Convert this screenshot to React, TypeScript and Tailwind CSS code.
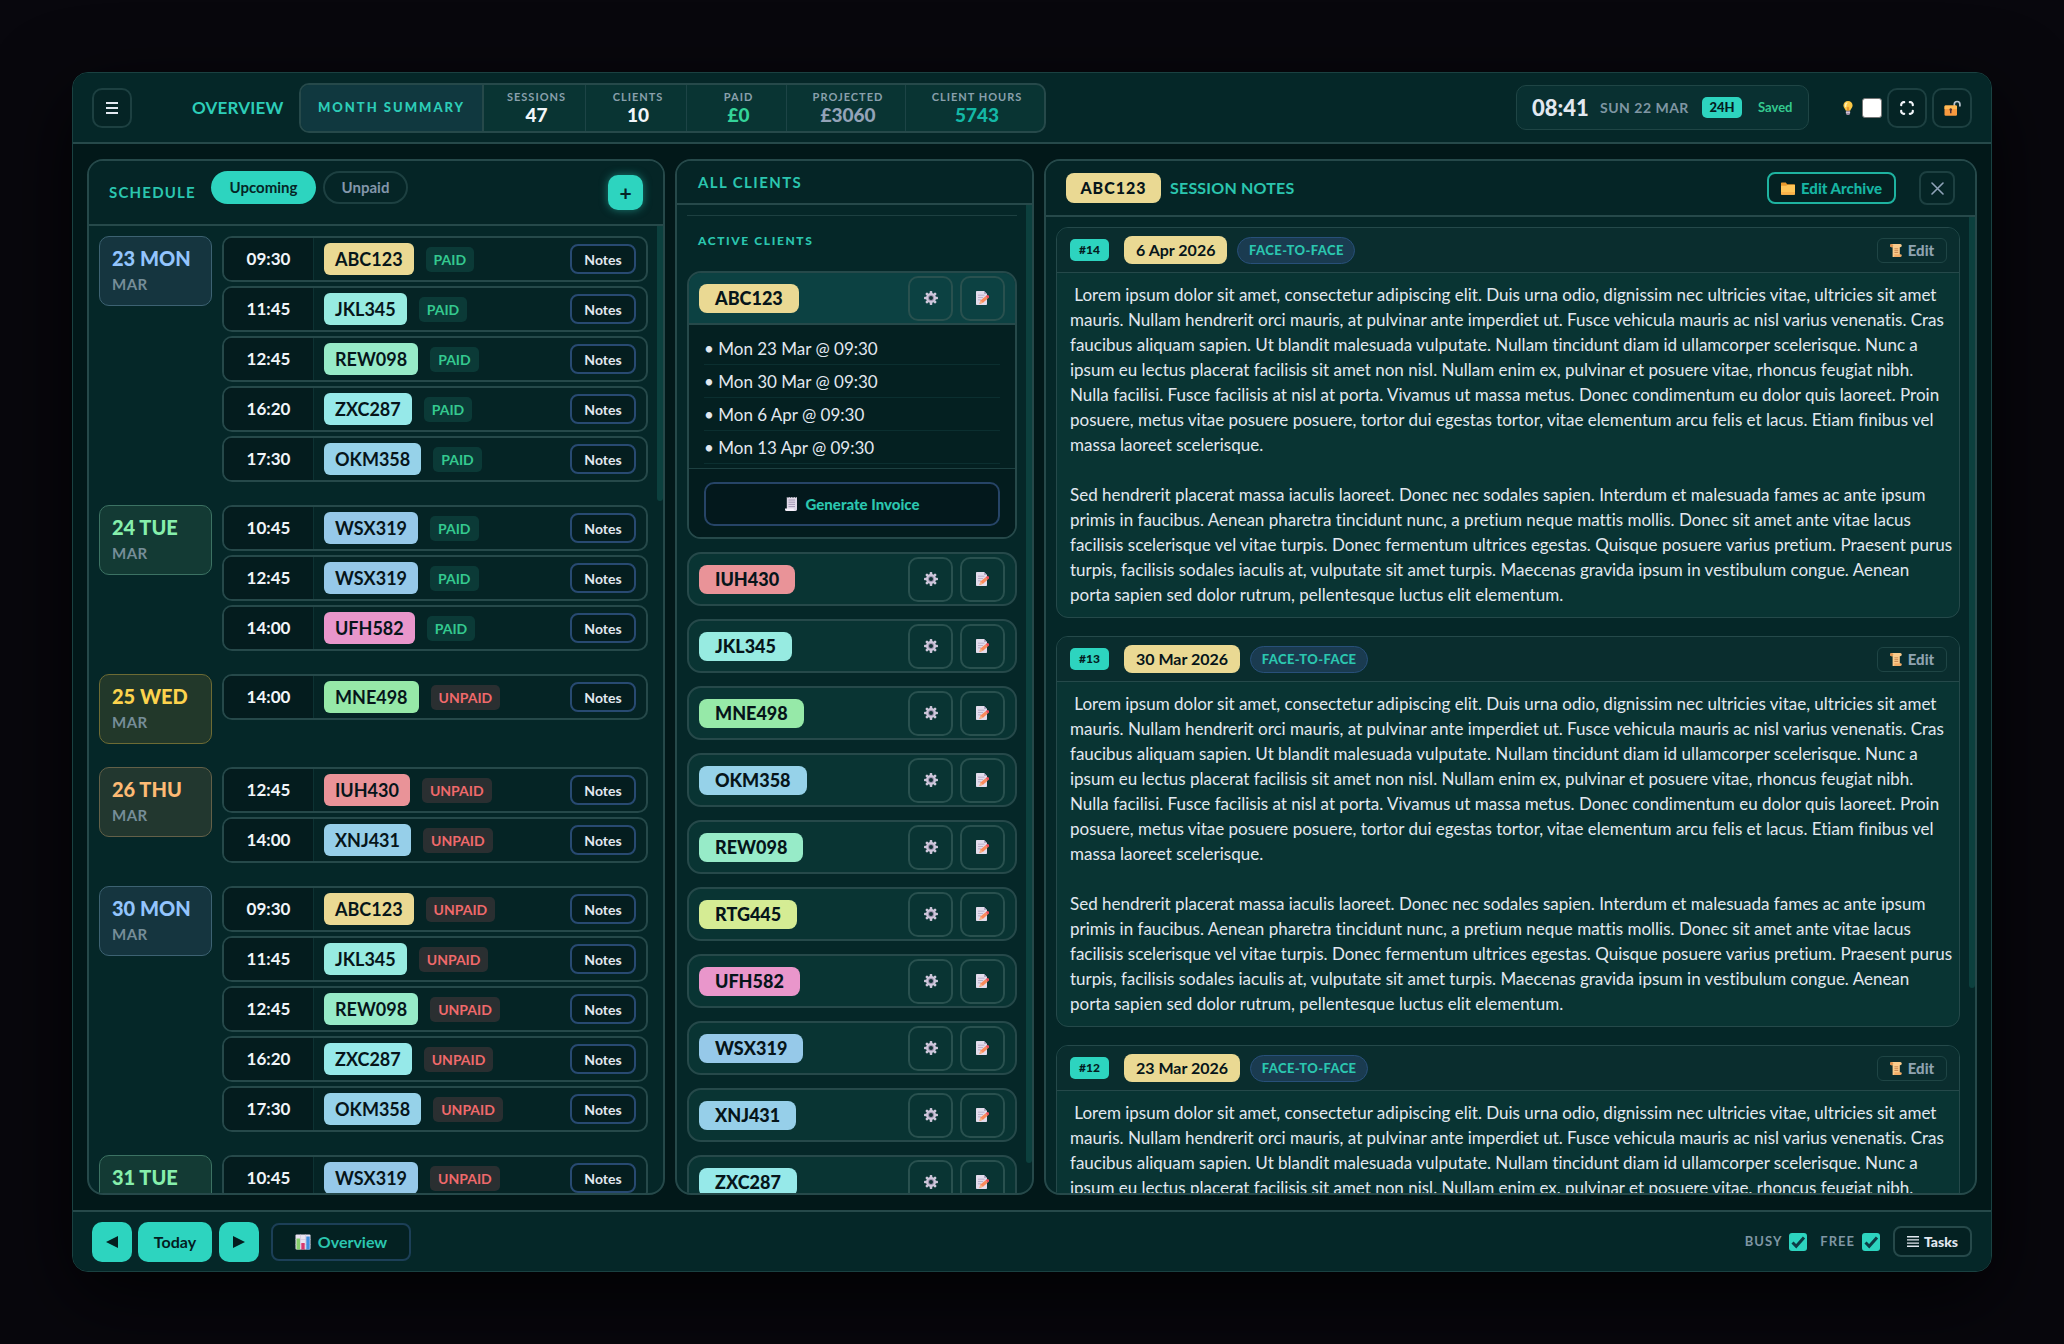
import React from "react";

/* ---------- data ---------- */

const tints: Record<string, string> = {
  ABC123: "bg-[#ead993]",
  IUH430: "bg-[#e99398]",
  JKL345: "bg-[#97ebe1]",
  MNE498: "bg-[#96e9a8]",
  OKM358: "bg-[#96d2e9]",
  REW098: "bg-[#97ebc8]",
  RTG445: "bg-[#d5ec94]",
  UFH582: "bg-[#e996cb]",
  WSX319: "bg-[#96c9e9]",
  XNJ431: "bg-[#96cfe9]",
  ZXC287: "bg-[#96e9e9]",
};

const dayStyles = {
  blue: "bg-[#15353f] border-[#3d6272] text-[#93c5fd]",
  green: "bg-[#133a34] border-[#3c7263] text-[#86efac]",
  yellow: "bg-[#22382a] border-[#6d6b34] text-[#fcd34d]",
  orange: "bg-[#22372f] border-[#636048] text-[#fdba74]",
};

type Day = {
  label: string;
  tone: keyof typeof dayStyles;
  paid: boolean;
  rows: [string, string][];
};

const monday: [string, string][] = [
  ["09:30", "ABC123"],
  ["11:45", "JKL345"],
  ["12:45", "REW098"],
  ["16:20", "ZXC287"],
  ["17:30", "OKM358"],
];
const tuesday: [string, string][] = [
  ["10:45", "WSX319"],
  ["12:45", "WSX319"],
  ["14:00", "UFH582"],
];

const days: Day[] = [
  { label: "23 MON", tone: "blue", paid: true, rows: monday },
  { label: "24 TUE", tone: "green", paid: true, rows: tuesday },
  { label: "25 WED", tone: "yellow", paid: false, rows: [["14:00", "MNE498"]] },
  { label: "26 THU", tone: "orange", paid: false, rows: [["12:45", "IUH430"], ["14:00", "XNJ431"]] },
  { label: "30 MON", tone: "blue", paid: false, rows: monday },
  { label: "31 TUE", tone: "green", paid: false, rows: [["10:45", "WSX319"]] },
];

const otherClients = ["IUH430", "JKL345", "MNE498", "OKM358", "REW098", "RTG445", "UFH582", "WSX319", "XNJ431", "ZXC287"];
const upcoming = ["Mon 23 Mar @ 09:30", "Mon 30 Mar @ 09:30", "Mon 6 Apr @ 09:30", "Mon 13 Apr @ 09:30"];

const stats: [string, string, string, string][] = [
  ["SESSIONS", "47", "text-[#f1f5f9]", "w-[102px]"],
  ["CLIENTS", "10", "text-[#f1f5f9]", "w-[101px]"],
  ["PAID", "£0", "text-[#34d399]", "w-[100px]"],
  ["PROJECTED", "£3060", "text-[#94a3b8]", "w-[119px]"],
  ["CLIENT HOURS", "5743", "text-[#14b8a6]", "w-[138px]"],
];

const notes: [string, string][] = [
  ["#14", "6 Apr 2026"],
  ["#13", "30 Mar 2026"],
  ["#12", "23 Mar 2026"],
];

const noteText =
  " Lorem ipsum dolor sit amet, consectetur adipiscing elit. Duis urna odio, dignissim nec ultricies vitae, ultricies sit amet mauris. Nullam hendrerit orci mauris, at pulvinar ante imperdiet ut. Fusce vehicula mauris ac nisl varius venenatis. Cras faucibus aliquam sapien. Ut blandit malesuada vulputate. Nullam tincidunt diam id ullamcorper scelerisque. Nunc a ipsum eu lectus placerat facilisis sit amet non nisl. Nullam enim ex, pulvinar et posuere vitae, rhoncus feugiat nibh. Nulla facilisi. Fusce facilisis at nisl at porta. Vivamus ut massa metus. Donec condimentum eu dolor quis laoreet. Proin posuere, metus vitae posuere posuere, tortor dui egestas tortor, vitae elementum arcu felis et lacus. Etiam finibus vel massa laoreet scelerisque.\n\nSed hendrerit placerat massa iaculis laoreet. Donec nec sodales sapien. Interdum et malesuada fames ac ante ipsum primis in faucibus. Aenean pharetra tincidunt nunc, a pretium neque mattis mollis. Donec sit amet ante vitae lacus facilisis scelerisque vel vitae turpis. Donec fermentum ultrices egestas. Quisque posuere varius pretium. Praesent purus turpis, facilisis sodales iaculis at, vulputate sit amet turpis. Maecenas gravida ipsum in vestibulum congue. Aenean porta\u00a0sapien sed dolor rutrum, pellentesque luctus elit elementum.";

/* ---------- icons ---------- */

const Menu = () => (
  <svg width="12" height="12" viewBox="0 0 12 12" fill="currentColor" aria-hidden="true">
    <path d="M0 0h12v2H0zM0 5h12v2H0zM0 10h12v2H0z" />
  </svg>
);

const MenuFine = () => (
  <svg width="12" height="11" viewBox="0 0 12 11" fill="currentColor" aria-hidden="true">
    <path d="M0 0h12v1.400H0zM0 3.200h12v1.400H0zM0 6.400h12v1.400H0zM0 9.600h12V11H0z" />
  </svg>
);

const Fullscreen = () => (
  <svg width="14" height="14" viewBox="0 0 14 14" fill="none" stroke="currentColor" strokeWidth="2.200" strokeLinecap="round" aria-hidden="true">
    <path d="M1.200 4.200V3.700a2.500 2.500 0 0 1 2.500-2.500h.5M9.800 1.200h.5a2.500 2.500 0 0 1 2.500 2.500v.5M12.800 9.800v.5a2.500 2.500 0 0 1-2.500 2.500h-.5M4.200 12.800h-.5a2.500 2.500 0 0 1-2.500-2.500v-.5" />
  </svg>
);

const Close = () => (
  <svg width="13" height="13" viewBox="0 0 13 13" fill="none" stroke="currentColor" strokeWidth="1.6" strokeLinecap="round" aria-hidden="true">
    <path d="M1 1l11 11M12 1L1 12" />
  </svg>
);

const Bulb = () => (
  <svg width="10" height="14" viewBox="0 0 10 14" aria-hidden="true">
    <path d="M5 0a4.600 4.600 0 0 0-4.600 4.600C.4 7 2.400 7.800 2.800 9.800h4.400C7.600 7.800 9.600 7 9.600 4.600A4.600 4.600 0 0 0 5 0z" fill="#fbc846" />
    <path d="M3.600 1.500a3 3 0 0 0-1.900 3.200c.1 1 .6 1.500 1.200 1.500s.5-1 .6-2.100.8-1.600 1.100-2.100-.3-.8-1-.5z" fill="#fff0b5" />
    <path d="M3.900 5.500L5 6.500l1.100-1v4.300H3.900z" fill="#e8962e" />
    <path d="M2.900 9.800h4.200v2.700a1.400 1.400 0 0 1-1.400 1.400H4.300a1.400 1.400 0 0 1-1.400-1.400z" fill="#9c8fa5" />
    <path d="M2.900 11h4.200v1H2.900z" fill="#d0c4d6" />
  </svg>
);

const Unlock = () => (
  <svg width="17" height="16" viewBox="0 0 17 16" aria-hidden="true">
    <path d="M10.300 6.500V4.300a2.800 2.800 0 0 1 5.600 0v1.500" fill="none" stroke="#b9c3cf" strokeWidth="1.700" strokeLinecap="round" />
    <rect x="0.500" y="5.500" width="12.500" height="10.300" rx="1.200" fill="#f99a3f" />
    <path d="M1.700 5.500h10.100A1.200 1.200 0 0 1 13 6.700V9H.5V6.700a1.200 1.200 0 0 1 1.200-1.200z" fill="#ffba55" />
    <path d="M6.700 8.200a1.400 1.400 0 0 1 .8 2.500v2.500H6v-2.500a1.400 1.400 0 0 1 .7-2.500z" fill="#4d2f35" />
  </svg>
);

const Gear = () => (
  <svg width="14" height="14" viewBox="0 0 14 14" aria-hidden="true">
    <g fill="#cdc6da">
      <circle cx="7" cy="7" r="5" />
      <rect x="5.700" y="0" width="2.600" height="14" rx=".8" />
      <rect x="5.700" y="0" width="2.600" height="14" rx=".8" transform="rotate(45 7 7)" />
      <rect x="5.700" y="0" width="2.600" height="14" rx=".8" transform="rotate(90 7 7)" />
      <rect x="5.700" y="0" width="2.600" height="14" rx=".8" transform="rotate(135 7 7)" />
    </g>
    <circle cx="7" cy="7" r="3" fill="#9c91ae" />
    <circle cx="7" cy="7" r="2" fill="#113436" />
  </svg>
);

const Memo = () => (
  <svg width="13" height="14" viewBox="0 0 13 14" aria-hidden="true">
    <path d="M.8 0h7.200l3 3v10.200a.8.8 0 0 1-.8.8H.8a.8.8 0 0 1-.8-.8V.8A.8.8 0 0 1 .8 0z" fill="#e3dcec" />
    <path d="M8 0l3 3H8z" fill="#b6a9c6" />
    <path d="M2 4.200h6.500M2 6.500h5M2 8.800h3" stroke="#b3a7c3" strokeWidth=".8" />
    <path d="M9.600 5.200l2.300 2.300-4.900 4.300-3.600 1.100 1-3.400z" fill="#fb8a5c" />
    <path d="M9.600 5.200l.8-.7a1.620 1.620 0 0 1 2.300 2.300l-.8.700z" fill="#ef4f5b" />
    <path d="M4.400 9.500L7 11.800l-3.600 1.100z" fill="#f6b48a" />
  </svg>
);

const Folder = () => (
  <svg width="14" height="13" viewBox="0 0 14 13" aria-hidden="true">
    <path d="M.7.500h4.100l1.400 1.700h7.100a.7.700 0 0 1 .7.700V7H0V1.200A.7.700 0 0 1 .7.500z" fill="#e89a2c" />
    <path d="M0 3.800h5.200l1.200-.9H14v8.900a.9.900 0 0 1-.9.900H.9a.9.900 0 0 1-.9-.9z" fill="#ffc658" />
    <path d="M0 10h14v1.800a.9.900 0 0 1-.9.900H.9a.9.900 0 0 1-.9-.9z" fill="#fbb34a" />
  </svg>
);

const Scroll = () => (
  <svg width="12" height="13" viewBox="0 0 12 13" aria-hidden="true">
    <path d="M1.600 0h8.600a1.600 1.600 0 0 1 0 3.200H9.800V13H2.600V3.200h-1a1.600 1.600 0 0 1 0-3.200z" fill="#fbcb8b" />
    <path d="M3.600 10.200h6.800a1.400 1.400 0 0 1 0 2.800H3.600a1.500 1.500 0 0 0 0-2.800z" fill="#f3ad67" />
    <path d="M1.600 0a1.600 1.600 0 1 0 1.600 1.600A1.600 1.600 0 0 0 1.600 0z" fill="#e0924e" />
    <path d="M4.400 4.800h3.800M4.400 6.700h3.800M4.400 8.500h3.800" stroke="#c07a46" strokeWidth=".8" />
  </svg>
);

const Receipt = () => (
  <svg width="12" height="14" viewBox="0 0 12 14" aria-hidden="true">
    <path d="M1.800 0l1.200.8L4.200 0l1.300.8L6.800 0 8 .8 9.300 0l1.200.8L12 0v12.600a1.400 1.400 0 0 1-1.400 1.400H1.800z" fill="#e0d9e8" />
    <path d="M0 11.500h8.600c0 1.500.6 2.500 2 2.500H1.600A1.600 1.600 0 0 1 0 12.400z" fill="#f5f0fa" />
    <path d="M3.500 3h6.500M3.500 5.200h6.500M3.500 7.400h6.500M3.500 9.600h6.500" stroke="#9d91ae" strokeWidth=".9" />
  </svg>
);

const Chart = () => (
  <svg width="16" height="16" viewBox="0 0 16 16" aria-hidden="true">
    <rect x=".5" y=".5" width="15" height="15" rx="1" fill="#eae3f1" />
    <path d="M.5 5.500h15M.5 10.500h15M5.500.5v15M10.500.5v15" stroke="#cdc2da" strokeWidth=".6" />
    <path d="M1.500 4.500h3.500v11H1.500z" fill="#86d06c" />
    <path d="M6.300 9h3.400v6.500H6.300z" fill="#d8386f" />
    <path d="M11.300 2.500h3.400v13h-3.400z" fill="#3f8fe0" />
  </svg>
);

const Triangle = ({ flip = false }: { flip?: boolean }) => (
  <svg width="12" height="12" viewBox="0 0 12 12" fill="currentColor" aria-hidden="true">
    {flip ? <path d="M12 0v12L0 6z" /> : <path d="M0 0v12l12-6z" />}
  </svg>
);

/* ---------- shared pieces ---------- */

const panel = "flex min-h-0 min-w-0 flex-col overflow-hidden rounded-2xl border-2 border-[#26494a] bg-[#052728]";
const squareButton = "flex size-10 items-center justify-center rounded-[10px] border-2 border-[#1d4041] bg-[#052425]";

function ScrollArea({ thumb, children }: { thumb: string; children: React.ReactNode }) {
  return (
    <div className="relative min-h-0 flex-1">
      <div className="h-full overflow-y-auto pl-[10px] pr-[15px] pt-[10px] [scrollbar-width:none]">{children}</div>
      <div className={`absolute right-0 top-0 w-[6px] rounded-b-sm bg-[#0c403e] ${thumb}`} />
    </div>
  );
}

/* ---------- sections ---------- */

function Header() {
  return (
    <header className="flex h-[71px] shrink-0 items-center border-b-2 border-[#26494a] bg-[#052728] px-[19px]">
      <button className={`${squareButton} text-slate-200`} aria-label="Menu"><Menu /></button>
      <h1 className="ml-[60px] w-[107px] text-[17px] font-bold tracking-[0.2px] text-[#2dcdb8]">OVERVIEW</h1>
      <div className="flex h-[50px] overflow-hidden rounded-[10px] border-2 border-[#26494a] bg-[#093433]">
        <div className="flex w-[183px] items-center justify-center border-r-2 border-[#26494a] bg-[#10383f] text-[13px] font-black tracking-[2px] text-[#2dcdb8]">
          MONTH SUMMARY
        </div>
        {stats.map(([label, value, tone, width], i) => (
          <div key={label} className={`flex flex-col items-center justify-center pl-1 ${width} ${i < stats.length - 1 ? "border-r border-[#1d4446]" : ""}`}>
            <span className="whitespace-nowrap text-[11px] font-bold leading-[14px] tracking-[1px] text-[#8aa0ac]">{label}</span>
            <span className={`text-[19px] font-black leading-[22px] ${tone}`}>{value}</span>
          </div>
        ))}
      </div>
      <div className="ml-auto flex h-[45px] w-[293px] items-center rounded-[10px] border border-[#1f4545] bg-[#093031] pl-[15px]">
        <span className="w-[68px] text-[22px] font-black text-slate-200">08:41</span>
        <span className="w-[102px] whitespace-nowrap text-[14px] font-bold tracking-[0.5px] text-[#7f96a3]">SUN 22 MAR</span>
        <button className="h-[21px] w-10 rounded-[5px] bg-[#2dd4bf] text-[13px] font-black text-[#041d1f]">24H</button>
        <span className="ml-4 text-[13px] font-bold text-[#34c98f]">Saved</span>
      </div>
      <label className="ml-[34px] flex items-center gap-[9px]">
        <Bulb />
        <input type="checkbox" aria-label="Light mode" className="size-5 appearance-none rounded-[3px] border border-[#767676] bg-white" />
      </label>
      <button className={`${squareButton} ml-[5px] text-slate-100`} aria-label="Full screen"><Fullscreen /></button>
      <button className={`${squareButton} ml-[5px]`} aria-label="Unlock"><Unlock /></button>
    </header>
  );
}

function Schedule() {
  return (
    <section className={panel}>
      <div className="flex h-[65px] shrink-0 items-center border-b-2 border-[#26494a] bg-[#052526] pl-5 pr-5">
        <h2 className="w-[102px] text-[15px] font-bold tracking-[1.2px] text-[#2bc6af]">SCHEDULE</h2>
        <div className="mb-[10px] flex gap-[7px] text-[15px] font-bold">
          <button className="h-[33px] w-[105px] rounded-full bg-[#2dd4bf] text-[#052526]">Upcoming</button>
          <button className="h-[33px] w-[85px] rounded-full border-2 border-[#1d4041] text-[#8397ab]">Unpaid</button>
        </div>
        <button className="ml-auto size-[35px] rounded-[10px] bg-[#2dd4bf] text-[21px] font-bold leading-[30px] text-[#052526] shadow-[0_0_8px_rgba(45,212,191,0.5)]" aria-label="Add session">+</button>
      </div>
      <ScrollArea thumb="h-[275px]">
        <div className="flex flex-col gap-[23px]">
          {days.map((day) => (
            <div key={day.label} className="flex items-start gap-[10px]">
              <div className={`h-[70px] w-[113px] shrink-0 rounded-[10px] border pl-3 pt-2 ${dayStyles[day.tone]}`}>
                <div className="text-[20px] font-black leading-[26px]">{day.label}</div>
                <div className="text-[15px] font-bold leading-[26px] tracking-[0.5px] text-[#768d98]">MAR</div>
              </div>
              <div className="flex flex-1 flex-col gap-1">
                {day.rows.map(([time, code]) => (
                  <div key={time} className="flex h-[46px] items-center overflow-hidden rounded-[10px] border-2 border-[#26494a] bg-[#052425]">
                    <div className="flex h-full w-[90px] items-center justify-center border-r border-[#0d3233] bg-[#041c1e] text-[17px] font-bold text-slate-100">{time}</div>
                    <span className={`ml-[10px] rounded-md px-[11px] text-[18px] font-bold leading-[32px] text-[#06151a] ${tints[code]}`}>{code}</span>
                    <span className={`ml-3 rounded-[5px] px-[8px] text-[14px] font-bold leading-[25px] ${day.paid ? "bg-[#0b3a37] text-[#34c98f]" : "bg-[#2a2f31] text-[#f0696b]"}`}>
                      {day.paid ? "PAID" : "UNPAID"}
                    </span>
                    <button className="ml-auto mr-[10px] h-[30px] w-[66px] rounded-lg border-2 border-[#284a72] bg-[#041d1f] text-[14px] font-bold text-slate-200">Notes</button>
                  </div>
                ))}
              </div>
            </div>
          ))}
        </div>
      </ScrollArea>
    </section>
  );
}

function ClientBar({ code, children }: { code: string; children?: React.ReactNode }) {
  return (
    <article className="overflow-hidden rounded-[14px] border-2 border-[#26494a] bg-[#093433]">
      <div className={`flex h-[50px] items-center gap-[7px] pl-[10px] pr-[10px] ${children ? "bg-[#0c4142]" : ""}`}>
        <span className={`mr-auto rounded-lg px-4 text-[18px] font-black leading-[29px] text-[#06151a] ${tints[code]}`}>{code}</span>
        <button className="flex size-[45px] items-center justify-center rounded-[10px] border-2 border-[#29514f]" aria-label={`${code} settings`}><Gear /></button>
        <button className="flex size-[45px] items-center justify-center rounded-[10px] border-2 border-[#29514f]" aria-label={`${code} notes`}><Memo /></button>
      </div>
      {children}
    </article>
  );
}

function Clients() {
  return (
    <section className={panel}>
      <div className="flex h-11 shrink-0 items-center border-b-2 border-[#26494a] bg-[#052526] pl-[21px]">
        <h2 className="text-[15px] font-bold tracking-[1.4px] text-[#2bc6af]">ALL CLIENTS</h2>
      </div>
      <ScrollArea thumb="h-[97%]">
        <h3 className="mb-[14px] flex h-[42px] items-end border-t border-[#1d4041] pb-[7px] pl-[11px] text-[12px] font-black leading-[18px] tracking-[1.6px] text-[#2bc6af]">
          ACTIVE CLIENTS
        </h3>
        <div className="flex flex-col gap-[13px]">
          <ClientBar code="ABC123">
            <div className="border-t-2 border-[#26494a] bg-[#042021]">
              <ul className="px-[15px] pb-1 pt-[7px]">
                {upcoming.map((u) => (
                  <li key={u} className="h-[33px] border-b border-[#0b2f30] text-[17px] leading-[34px] text-slate-200">• {u}</li>
                ))}
              </ul>
              <div className="border-t border-[#1d4041] bg-[#031c1e] px-[15px] pb-[11px] pt-[13px]">
                <button className="flex h-11 w-full items-center justify-center gap-[9px] rounded-[10px] border-2 border-[#264467] bg-[#03181c] text-[15px] font-black text-[#2bc6af]">
                  <Receipt />Generate Invoice
                </button>
              </div>
            </div>
          </ClientBar>
          {otherClients.map((c) => <ClientBar key={c} code={c} />)}
        </div>
      </ScrollArea>
    </section>
  );
}

function SessionNotes() {
  return (
    <section className={panel}>
      <div className="flex h-14 shrink-0 items-center border-b-2 border-[#26494a] bg-[#052526] pl-5 pr-5">
        <span className={`flex h-[30px] w-[95px] items-center justify-center rounded-lg text-[16px] font-black tracking-[1px] text-[#06151a] ${tints.ABC123}`}>ABC123</span>
        <h2 className="ml-[9px] text-[16px] font-bold tracking-[0.2px] text-[#2bc6af]">SESSION NOTES</h2>
        <button className="ml-auto flex h-8 w-[129px] items-center justify-center gap-[6px] rounded-lg border-2 border-[#1eb3a0] bg-[#042122] text-[15px] font-black text-[#17b5a2]">
          <Folder />Edit Archive
        </button>
        <button className="ml-[23px] flex h-[34px] w-9 items-center justify-center rounded-lg border-2 border-[#1d4041] text-[#8fa3b8]" aria-label="Close"><Close /></button>
      </div>
      <ScrollArea thumb="h-[79%]">
        <div className="flex flex-col gap-[18px]">
          {notes.map(([num, date]) => (
            <article key={num} className="overflow-hidden rounded-xl border border-[#25494a] bg-[#093433]">
              <header className="flex h-[45px] items-center border-b border-[#25494a] bg-[#0a2d2e] px-3">
                <span className="ml-px w-[39px] rounded-[5px] bg-[#2dd4bf] text-center text-[12px] font-black leading-[22px] text-[#041d1f]">{num}</span>
                <span className="ml-[15px] rounded-lg bg-[#ead993] px-3 text-[16px] font-bold leading-[28px] text-[#06151a]">{date}</span>
                <span className="ml-[10px] w-[118px] rounded-full border border-[#28507a] bg-[#1a3b50] text-center text-[13px] font-black leading-[25px] tracking-[0.4px] text-[#2bc6af]">FACE-TO-FACE</span>
                <button className="ml-auto flex h-[25px] w-[70px] items-center justify-center gap-[6px] rounded-md border border-[#1f4545] text-[15px] font-black text-[#8fa3b0]">
                  <Scroll />Edit
                </button>
              </header>
              <p className="whitespace-pre-wrap pb-[10px] pl-[13px] pr-1 pt-[9px] text-[17px] leading-[25px] text-slate-200 [font-variant-ligatures:none]">{noteText}</p>
            </article>
          ))}
        </div>
      </ScrollArea>
    </section>
  );
}

function Check({ label }: { label: string }) {
  return (
    <label className="flex items-center gap-[7px] text-[13px] font-bold tracking-[1px] text-[#7f96a3]">
      {label}
      <span className="relative flex size-[18px]">
        <input type="checkbox" defaultChecked className="size-[18px] appearance-none rounded-[3px] bg-[#2dd4bf]" />
        <svg className="pointer-events-none absolute inset-0" width="18" height="18" viewBox="0 0 18 18" fill="none" stroke="#0d3b44" strokeWidth="3" aria-hidden="true">
          <path d="M3.500 9.500l3.700 3.700L15 4.500" />
        </svg>
      </span>
    </label>
  );
}

function Footer() {
  const solid = "flex h-10 items-center justify-center rounded-[10px] bg-[#2dd4bf] text-[#041d1f]";
  return (
    <footer className="flex h-[61px] shrink-0 items-center border-t-2 border-[#26494a] bg-[#052728] px-[19px]">
      <button className={`${solid} w-10`} aria-label="Previous"><Triangle flip /></button>
      <button className={`${solid} ml-[6px] w-[74px] text-[16px] font-bold`}>Today</button>
      <button className={`${solid} ml-[7px] w-10`} aria-label="Next"><Triangle /></button>
      <button className="ml-3 flex h-[38px] w-[140px] items-center justify-center gap-[7px] rounded-lg border-2 border-[#1c3f57] bg-[#042122] text-[16px] font-bold text-[#2bc6af]">
        <Chart />Overview
      </button>
      <div className="ml-auto flex items-center gap-[13px]">
        <Check label="BUSY" />
        <Check label="FREE" />
        <button className="flex h-[31px] w-[79px] items-center justify-center gap-[5px] rounded-lg border-2 border-[#26494a] bg-[#042122] text-[14px] font-black text-slate-200">
          <MenuFine />Tasks
        </button>
      </div>
    </footer>
  );
}

export default function App() {
  return (
    <div className="min-h-screen bg-[#08070d] p-[72px] font-['Lato','Open_Sans',sans-serif]">
      <div className="flex h-[calc(100vh-144px)] flex-col overflow-hidden rounded-2xl border border-[#1a4141] bg-[#021819] shadow-[0_25px_80px_rgba(0,0,0,0.8)]">
        <Header />
        <main className="grid min-h-0 flex-1 grid-cols-[578fr_359fr_933fr] gap-[10px] p-[15px] pb-[15px] pl-[14px] pr-[14px]">
          <Schedule />
          <Clients />
          <SessionNotes />
        </main>
        <Footer />
      </div>
    </div>
  );
}
